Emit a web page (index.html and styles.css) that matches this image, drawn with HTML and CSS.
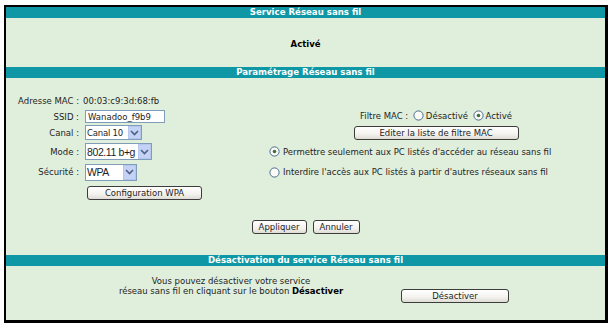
FILE: index.html
```html
<!DOCTYPE html>
<html lang="fr">
<head>
<meta charset="utf-8">
<title>Service Réseau sans fil</title>
<link rel="stylesheet" href="styles.css">
</head>
<body>
<div class="panel">
  <div class="hdr">Service Réseau sans fil</div>
  <div class="status">Activé</div>

  <div class="hdr">Paramétrage Réseau sans fil</div>
  <div class="settings">
    <div class="form">
      <div class="lbl">Adresse MAC :</div>
      <div class="val mac">00:03:c9:3d:68:fb</div>
      <div class="right"></div>

      <div class="lbl">SSID :</div>
      <div class="val"><span class="input">Wanadoo_f9b9</span></div>
      <div class="right center">
        <span class="filter">Filtre MAC :
          <span class="radio"><svg width="11" height="11" viewBox="0 0 11 11"><circle cx="5.5" cy="5.5" r="4.6" fill="#fbfbf8" stroke="#3a5f87" stroke-width="0.9"/></svg></span>Désactivé
          <span class="radio"><svg width="11" height="11" viewBox="0 0 11 11"><circle cx="5.5" cy="5.5" r="4.6" fill="#fbfbf8" stroke="#3a5f87" stroke-width="0.9"/><circle cx="5.5" cy="5.5" r="1.8" fill="#3f6f3f"/></svg></span>Activé
        </span>
      </div>

      <div class="lbl">Canal :</div>
      <div class="val"><span class="select tahoma w57"><span class="stext">Canal 10</span><span class="arrow"><svg width="9" height="6" viewBox="0 0 9 6"><path d="M1 1 L4.5 4.5 L8 1" fill="none" stroke="#4d6185" stroke-width="1.6"/></svg></span></span></div>
      <div class="right center"><span class="btn w165">Editer la liste de filtre MAC</span></div>

      <div class="lbl">Mode :</div>
      <div class="val"><span class="select arial w67"><span class="stext">802.11 b+g</span><span class="arrow"><svg width="9" height="6" viewBox="0 0 9 6"><path d="M1 1 L4.5 4.5 L8 1" fill="none" stroke="#4d6185" stroke-width="1.6"/></svg></span></span></div>
      <div class="right opt"><span class="radio"><svg width="11" height="11" viewBox="0 0 11 11"><circle cx="5.5" cy="5.5" r="4.6" fill="#fbfbf8" stroke="#3a5f87" stroke-width="0.9"/><circle cx="5.5" cy="5.5" r="1.8" fill="#3f6f3f"/></svg></span>Permettre seulement aux PC listés d'accéder au réseau sans fil</div>

      <div class="lbl">Sécurité :</div>
      <div class="val"><span class="select arial w52"><span class="stext">WPA</span><span class="arrow"><svg width="9" height="6" viewBox="0 0 9 6"><path d="M1 1 L4.5 4.5 L8 1" fill="none" stroke="#4d6185" stroke-width="1.6"/></svg></span></span></div>
      <div class="right opt"><span class="radio"><svg width="11" height="11" viewBox="0 0 11 11"><circle cx="5.5" cy="5.5" r="4.6" fill="#fbfbf8" stroke="#3a5f87" stroke-width="0.9"/></svg></span>Interdire l'accès aux PC listés à partir d'autres réseaux sans fil</div>

      <div class="lbl"></div>
      <div class="val"><span class="btn w115 cfg">Configuration WPA</span></div>
      <div class="right"></div>
    </div>
    <div class="actions">
      <span class="btn w55">Appliquer</span>
      <span class="btn w47">Annuler</span>
    </div>
  </div>

  <div class="hdr">Désactivation du service Réseau sans fil</div>
  <div class="deact">
    <div class="msg">Vous pouvez désactiver votre service<br>réseau sans fil en cliquant sur le bouton <b>Désactiver</b></div>
    <span class="btn w108">Désactiver</span>
  </div>
</div>
</body>
</html>
```
FILE: styles.css
```css
html, body {
  margin: 0;
  padding: 0;
  background: #ffffff;
}
body {
  font-family: "DejaVu Sans", Verdana, sans-serif;
  font-size: 8.5px;
  color: #1e1e1e;
}
.panel {
  margin: 5px 0 0 4px;
  width: 599px;
  border-style: solid;
  border-color: #000;
  border-width: 2px 3px 3px 2px;
  background: #e0eedc;
}
.hdr {
  height: 11px;
  line-height: 11px;
  background: #0f97a5;
  color: #fff;
  font-weight: bold;
  font-size: 8.6px;
  text-align: center;
}
.status {
  height: 49px;
  display: flex;
  align-items: center;
  justify-content: center;
  font-weight: bold;
  color: #000;
  padding-top: 2px;
  box-sizing: border-box;
}
.settings {
  height: 177px;
  padding-top: 15px;
  box-sizing: border-box;
}
.form {
  display: grid;
  grid-template-columns: 76px 185px 1fr;
  grid-template-rows: 16px 15px 17px 21px 20px 21px;
  align-items: center;
}
.lbl {
  text-align: right;
  padding-right: 3px;
  white-space: nowrap;
}
.mac { margin-left: -2px; }
.val { padding-left: 3px; display: flex; align-items: center; white-space: nowrap; }
.right { white-space: nowrap; }
.center { text-align: center; }
.opt { display: flex; align-items: center; padding-left: 2px; }
.radio { display: inline-flex; vertical-align: middle; margin: 0 2px 0 2px; position: relative; top: -1px; }
.opt .radio { margin: 0 3px 0 0; top: 0; }
.filter { display: inline-block; }

.input {
  display: inline-block;
  width: 80px;
  height: 13px;
  line-height: 12px;
  box-sizing: border-box;
  border: 1px solid #7f9db9;
  background: #fff;
  padding-left: 2px;
}
.select {
  display: inline-flex;
  align-items: center;
  justify-content: space-between;
  height: 15px;
  box-sizing: border-box;
  border: 1px solid #7f9db9;
  background: #fff;
  padding-left: 1px;
  white-space: nowrap;
}
.tahoma .stext { letter-spacing: -0.2px; }
.stext { flex: 1; min-width: 0; }
.select .arrow {
  flex: none;
  width: 13px;
  height: 13px;
  box-sizing: border-box;
  background: #c4d3f5;
  border: 1px solid #b5c6ef;
  display: inline-flex;
  align-items: center;
  justify-content: center;
}
.arial { font-family: "Liberation Sans", Arial, sans-serif; font-size: 10.5px; height: 17px; }
.arial .stext { letter-spacing: -0.4px; }
.arial .arrow { height: 15px; }
.w57 { width: 57px; }
.w67 { width: 67px; }
.w52 { width: 52px; }

.btn {
  display: inline-block;
  box-sizing: border-box;
  height: 14px;
  line-height: 12px;
  border: 1px solid #3c3c3c;
  border-radius: 3px;
  background: linear-gradient(#ffffff, #f3f2ee 60%, #dedcd4);
  text-align: center;
  color: #1e1e1e;
  white-space: nowrap;
}
.cfg { margin-left: 2px; }
.w165 { width: 165px; }
.w115 { width: 115px; }
.w55 { width: 55px; }
.w47 { width: 47px; }
.w108 { width: 108px; }
.actions {
  margin-top: 17px;
  display: flex;
  justify-content: center;
  gap: 6px;
}
.deact {
  height: 54px;
  display: flex;
  align-items: flex-start;
  padding-left: 94px;
  padding-top: 10px;
  box-sizing: border-box;
}
.msg {
  width: 262px;
  text-align: center;
  line-height: 10px;
}
.deact .btn { margin-left: 39px; margin-top: 13px; }
.msg b { color: #000; }
```
